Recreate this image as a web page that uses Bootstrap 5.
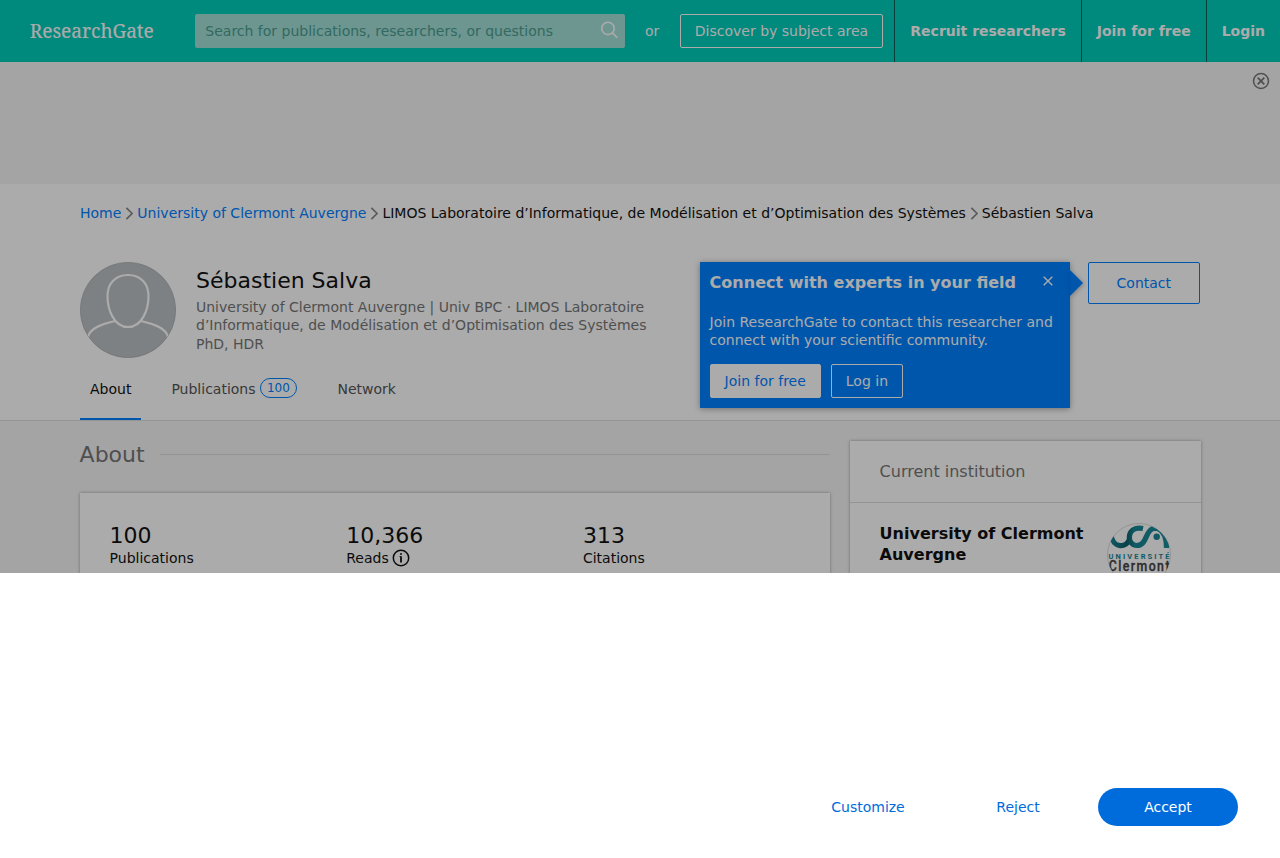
<!DOCTYPE html>
<html lang="en">
<head>
<meta charset="utf-8">
<meta name="viewport" content="width=device-width, initial-scale=1">
<title>Sébastien Salva - ResearchGate</title>
<link rel="stylesheet" href="https://cdn.jsdelivr.net/npm/bootstrap@5.3.0/dist/css/bootstrap.min.css">
<style>
body{font-family:"DejaVu Sans",sans-serif;font-size:14px;line-height:18px;color:#111;background:#f5f5f5;height:858px;overflow:hidden}
a{text-decoration:none;color:#0080ff}
.topbar{height:62px;background:#00ccbb;color:#fff}
.brand{width:195px;padding-left:29px}
.brand svg,.crumbs svg,.tabs-row svg{display:block}
.searchbox{width:430px;height:34px;border-radius:2px;background:#a3e0d7;color:#4b9d91;padding:0 7.500px 0 10.3px}
.rg-btn{height:34px;border:1px solid #fff;border-radius:2px;padding:0 14px;font-size:14px;color:#fff;display:inline-flex;align-items:center;white-space:nowrap}
.rg-btn.solid{background:#fff;color:#0080ff}
.rg-btn.contact{height:42px;width:112px;border-color:#0080ff;color:#0080ff;justify-content:center;padding-right:14.4px}
.toplink{height:62px;border-left:1px solid #085b57;padding:0 15px;font-weight:700;color:#fff;display:flex;align-items:center}
.ad{height:122px;padding:10px 10px}
.profile{height:237px;background:#fff;border-bottom:1px solid #ddd}
.wrap{width:1120px;margin:0 auto}
.crumbs{padding-top:20px;height:78px;white-space:nowrap}
.crumbs svg{margin:3px 4px 0}
.person{height:96px}
.person h1{font-size:22px;line-height:28px;margin:5px 0 3px}
.info{margin-left:20px;width:470px;color:#777;line-height:18.4px}
.tabs-row{height:62px;gap:20px}
.tabs-row a{padding:22px 10px 0;height:62px;color:#555;display:flex;position:relative}
.tabs-row a.active{color:#111;border-bottom:2px solid #0080ff}
.count{border:1px solid #0080ff;border-radius:10px;height:20px;width:37px;font-size:12px;line-height:18px;text-align:center;color:#0080ff;margin:-2px .5px 0 4.4px}
.tip{right:130px;top:0;width:370px;height:146px;background:#0080ff;color:#fff;padding:10px;box-shadow:0 1px 6px rgba(0,0,0,.35)}
.tip:after{content:"";position:absolute;left:100%;top:8px;border:13px solid transparent;border-right:0;border-left-color:#0080ff;filter:drop-shadow(1px 1px 2px rgba(0,0,0,.25))}
.tip h2{font-size:16px;line-height:20px;font-weight:700;margin:1px 0 0 -.4px}
.tip p{margin:20px -6px 15px -.4px}
.tip .rg-btn{padding:0 14.4px 0 13.6px}
.main-col{width:750px}
.side-col{width:351px}
.section-title{font-size:22px;line-height:28px;color:#777;gap:15.4px;margin:20px 0 24px -.4px}
.section-title span{height:1px;flex:1;background:#ddd;margin-top:-1px}
.panel{background:#fff;box-shadow:0 0 3px rgba(0,0,0,.35)}
.stats{padding:29px 30.4px 0 29.6px;height:180px}
.stats .row{--bs-gutter-x:20px}
.figure-num{font-size:22px;line-height:28px;margin-bottom:-1px}
.side-head{height:62px;border-bottom:1px solid #ddd;padding:0 29.6px;font-size:16px;color:#777}
.inst{padding:20px 30px 0 29.6px;height:150px;font-size:16px;line-height:21px;font-weight:700}
.shade{background:rgba(0,0,0,.33);z-index:10}
.consent{background:#fff;height:285px;z-index:20;padding:0 42px 32px;gap:10px}
.consent .choice{width:140px;height:38px;border-radius:19px;display:flex;align-items:center;justify-content:center;color:#006cdc}
.consent .choice.accept{background:#006cdc;color:#fff}
</style>
</head>
<body>
<header class="topbar d-flex align-items-center">
  <a class="brand" href="#"><svg width="140" height="40" viewBox="0 -8 140 40"><text x="0.8" y="19" font-family="Noto Serif, DejaVu Serif Condensed, DejaVu Serif, serif" font-size="19" textLength="124" lengthAdjust="spacingAndGlyphs" fill="#fff" stroke="#fff" stroke-width=".15">ResearchGate</text></svg></a>
  <div class="searchbox d-flex align-items-center justify-content-between"><span>Search for publications, researchers, or questions</span>
    <svg width="18" height="18" viewBox="0 0 18 18" fill="none" stroke="#fff" stroke-width="1.6" style="margin-top:-2px"><circle cx="8" cy="7.4" r="6.2"/><path d="M12.4 11.9 17.3 16.8"/></svg></div>
  <span style="margin:0 20.5px 0 20px">or</span>
  <a class="rg-btn" href="#">Discover by subject area</a>
  <nav class="d-flex ms-auto"><a class="toplink" href="#">Recruit researchers</a><a class="toplink" href="#">Join for free</a><a class="toplink" href="#">Login</a></nav>
</header>
<div class="ad d-flex justify-content-end"><svg width="18" height="18" viewBox="0 0 18 18" fill="none" stroke="#777"><circle cx="9" cy="9" r="7.5" stroke-width="1.5"/><path d="m5.7 5.7 6.6 6.6m0-6.6-6.6 6.6" stroke-width="1.8"/></svg></div>
<section class="profile">
  <div class="wrap">
    <div class="crumbs d-flex"><a href="#">Home</a><svg width="8" height="13" viewBox="0 0 8 13" fill="none" stroke="#888" stroke-width="1.7"><path d="m1.400 .8 5.7 5.7-5.700 5.700"/></svg><a href="#">University of Clermont Auvergne</a><svg width="8" height="13" viewBox="0 0 8 13" fill="none" stroke="#888" stroke-width="1.7"><path d="m1.400 .8 5.7 5.7-5.700 5.700"/></svg><span>LIMOS Laboratoire d’Informatique, de Modélisation et d’Optimisation des Systèmes</span><svg width="8" height="13" viewBox="0 0 8 13" fill="none" stroke="#888" stroke-width="1.7"><path d="m1.400 .8 5.7 5.7-5.700 5.700"/></svg><span>Sébastien Salva</span></div>
    <div class="person d-flex position-relative">
      <svg width="96" height="96" viewBox="0 0 96 96"><defs><clipPath id="av"><circle cx="48" cy="48" r="47.5"/></clipPath></defs><circle cx="48" cy="48" r="47.6" fill="#bbc0c4" stroke="#a9aeb1" stroke-width=".8"/><g clip-path="url(#av)" fill="none" stroke="#fff" stroke-width="2.2"><path d="M48 13C35 13 27.500 22 27.500 34c0 13 6 31 20.500 31s20.500-18 20.500-31c0-12-7.500-21-20.500-21Z"/><path d="M35 59C22 62 10 66 8 75M61 59c13 3 25 7 27 16"/></g></svg>
      <div class="info"><h1 style="color:#111">Sébastien Salva</h1><div>University of Clermont Auvergne | Univ BPC · LIMOS Laboratoire<br>d’Informatique, de Modélisation et d’Optimisation des Systèmes<br>PhD, HDR</div></div>
      <div class="ms-auto"><a class="rg-btn contact" href="#">Contact</a></div>
      <aside class="tip position-absolute">
        <div class="d-flex justify-content-between"><h2>Connect with experts in your field</h2><svg width="10" height="10" viewBox="0 0 10 10" stroke="#fff" stroke-width="1.4" style="margin:4px 7px 0 0"><path d="m.7.7 8.6 8.6m0-8.6L.7 9.3"/></svg></div>
        <p>Join ResearchGate to contact this researcher and connect with your scientific community.</p>
        <div class="d-flex" style="gap:10px"><a class="rg-btn solid" href="#">Join for free</a><a class="rg-btn" href="#">Log in</a></div>
      </aside>
    </div>
    <nav class="tabs-row d-flex"><a class="active" href="#">About</a><a href="#">Publications<span class="count">100</span></a><a href="#">Network</a></nav>
  </div>
</section>
<main class="wrap d-flex" style="gap:20px">
  <div class="main-col flex-shrink-0">
    <div class="section-title d-flex align-items-center">About<span></span></div>
    <div class="panel stats"><div class="row">
      <div class="col-4"><div class="figure-num">100</div>Publications</div>
      <div class="col-4"><div class="figure-num">10,366</div><div class="d-flex">Reads<svg width="18" height="18" viewBox="0 0 18 18" fill="none" stroke="#111" stroke-width="1.5" style="margin-left:3.4px"><circle cx="9" cy="9" r="7.7"/><path d="M9 7.3v6.2" stroke-width="1.8"/><circle cx="9" cy="5" r=".6" fill="#111" stroke-width=".9"/><path d="M7.4 7.6H9" stroke-width=".7"/></svg></div></div>
      <div class="col-4"><div class="figure-num">313</div>Citations</div>
    </div></div>
  </div>
  <aside class="side-col flex-shrink-0 panel" style="margin-top:20px;height:240px">
    <div class="side-head d-flex align-items-center">Current institution</div>
    <div class="inst d-flex justify-content-between"><span>University of Clermont<br>Auvergne</span>
      <svg class="flex-shrink-0" width="64" height="64" viewBox="0 0 64 64"><defs><clipPath id="uca"><circle cx="32" cy="32" r="31.5"/></clipPath><linearGradient id="teal" gradientUnits="userSpaceOnUse" x1="3" y1="0" x2="62" y2="0"><stop offset="0" stop-color="#178795"/><stop offset=".28" stop-color="#10606e"/><stop offset=".42" stop-color="#178795"/><stop offset="1" stop-color="#198c99"/></linearGradient></defs><circle cx="32" cy="32" r="31.5" fill="#fff" stroke="#ddd"/><g clip-path="url(#uca)"><path d="M4 12c2 14 16 13 18.500 4M36 5.500C19 2 19 22.500 30 22.500 40 22.500 38 8 46 5.500M45 5.500h6C57 8 59.500 14 59.500 25" fill="none" stroke="url(#teal)" stroke-width="5.200"/><circle cx="49.700" cy="13.700" r="3.200" fill="#178795"/><g font-family="Roboto,sans-serif"><text x="1.500" y="36" font-size="7.500" font-weight="700" textLength="61" fill="#178795">UNIVERSITÉ</text><text transform="scale(.88 1)" x="2" y="48" font-size="14" font-weight="500" textLength="69" fill="#444" stroke="#444" stroke-width=".3">Clermont</text></g></g></svg></div>
  </aside>
</main>
<div class="shade position-fixed top-0 start-0 w-100 h-100"></div>
<div class="consent position-fixed bottom-0 start-0 w-100 d-flex justify-content-end align-items-end"><a class="choice" href="#">Customize</a><a class="choice" href="#">Reject</a><a class="choice accept" href="#">Accept</a></div>
<script src="https://cdn.jsdelivr.net/npm/bootstrap@5.3.0/dist/js/bootstrap.bundle.min.js"></script>
</body>
</html>
